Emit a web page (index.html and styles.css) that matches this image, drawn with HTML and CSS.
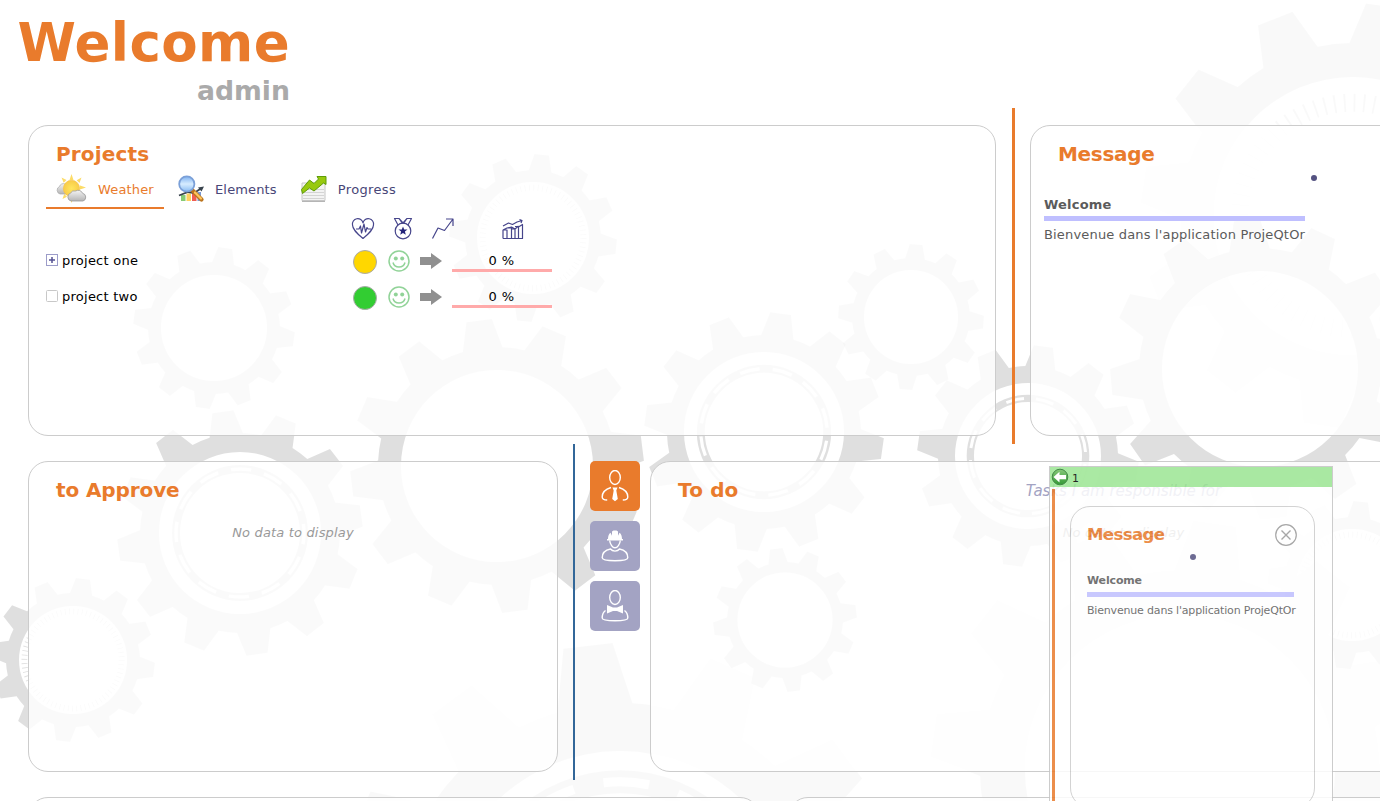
FILE: index.html
```html
<!DOCTYPE html>
<html lang="en">
<head>
<meta charset="utf-8">
<title>Welcome</title>
<link rel="stylesheet" href="styles.css">
</head>
<body>
<svg class="gears" id="gears" width="1380" height="801" viewBox="0 0 1380 801" aria-hidden="true"></svg>
<main class="page">
  <header class="hero">
    <h1 class="hero-title">Welcome</h1>
    <div class="hero-user">admin</div>
  </header>

  <div class="row row-top">
    <section class="panel projects">
      <h2 class="panel-title">Projects</h2>
      <nav class="tabs">
        <a class="tab tab-active"><svg class="tab-icon tab-icon-weather" width="32" height="30" viewBox="0 0 32 30">
          <defs>
            <linearGradient id="cloud" x1="0" y1="0" x2="0" y2="1"><stop offset="0" stop-color="#f4f4f4"/><stop offset="1" stop-color="#b5b5b5"/></linearGradient>
            <radialGradient id="sun"><stop offset="0" stop-color="#ffe65e"/><stop offset="1" stop-color="#f8cb48"/></radialGradient>
          </defs>
          <path d="M15.500 0l2 6h-4zM25.500 3.500l-2 5.600-2.800-2.800zM5.500 3.500l5 2.400-2.800 2.800zM30 13.500l-6 2v-4zM6.500 25l1.700-5 2.800 2.800zM15.500 29l-2-6h4z" fill="#fcdc68"/>
          <path d="M4 20a4 4 0 0 1-.5-7.500A4 4 0 0 1 9 10a4 4 0 0 1 6 4v6z" fill="url(#cloud)" stroke="#a9a9a9" stroke-width=".7"/>
          <circle cx="15.500" cy="14.500" r="8.200" fill="url(#sun)" stroke="#f5c04a" stroke-width=".6"/>
          <path d="M15 27a4.200 4.200 0 0 1-.4-8 4.300 4.300 0 0 1 5-2 4.800 4.800 0 0 1 7 2.300 4 4 0 0 1 .4 7.700z" fill="url(#cloud)" stroke="#999" stroke-width=".8"/>
        </svg><span>Weather</span></a>
        <a class="tab"><svg class="tab-icon tab-icon-elements" width="28" height="28" viewBox="0 0 28 28">
          <defs><linearGradient id="lens" x1="0" y1="0" x2="0" y2="1"><stop offset="0" stop-color="#7eb1f0"/><stop offset=".5" stop-color="#d7ecff"/><stop offset="1" stop-color="#8abcf3"/></linearGradient></defs>
          <path d="M4 20h4.500v6H4z" fill="#86cb75"/><path d="M9.500 18.500H14V26H9.500z" fill="#ffd05e"/><path d="M15 18h4.500v8H15z" fill="#f05d51"/><path d="M20.500 17H24v9h-3.500z" fill="#7998d2"/>
          <path d="M2 20.500l9-3.500 6 1 7-4.500" fill="none" stroke="#39434d" stroke-width="1.800"/><path d="M21 12.500l6-1-2.500 5z" fill="#39434d"/>
          <path d="M15 15l9.500 9.500" stroke="#bb751f" stroke-width="4.200" stroke-linecap="round"/><path d="M18 17.500l6 6" stroke="#ffc55a" stroke-width="2.200" stroke-linecap="round"/>
          <circle cx="9.800" cy="9" r="7.600" fill="url(#lens)" stroke="#7ba0d8" stroke-width="1.800"/>
        </svg><span>Elements</span></a>
        <a class="tab"><svg class="tab-icon tab-icon-progress" width="28" height="28" viewBox="0 0 28 28">
          <path d="M2 8h23v17.500H2z" fill="#f3f3f3" stroke="#c6c6c6"/><path d="M3 14.500h21M3 17.500h21M3 20.500h21M3 23.500h21" stroke="#d4d4d4"/><path d="M2 26.500h23" stroke="#b5b5b5"/>
          <path d="M1.500 14.500L9.500 5l4.500 3.500 4.500-4.500-1.500-2.500h9v8l-2.500-1.500-9.500 8-4.500-3-7 5.500z" fill="#98c90f" stroke="#5f9d08"/>
        </svg><span>Progress</span></a>
      </nav>
      <div class="grid">
        <div class="grid-row grid-head">
          <span></span>
          <svg width="24" height="24" viewBox="0 0 24 24" class="line-icon"><path d="M12 21.500C6 16.500 1.500 12.500 1.500 8a5.300 5.300 0 0 1 10.500-2A5.300 5.300 0 0 1 22.500 8c0 4.500-4.500 8.500-10.500 13.500zM5 12h3l1.500-3 1 7L13 7l1.500 8 1.500-4.500 1 1.500h3"/></svg>
          <svg width="24" height="24" viewBox="0 0 24 24" class="line-icon"><circle cx="12" cy="14" r="7.800"/><path d="M7 8L3.500 1.500H8L12 6l4-4.500h4.500L17 8M8 1.500l3.500 5M16 1.500l-3.500 5"/><path class="solid" d="M12 9.500l1.200 3 3.300.1-2.600 2 .9 3.200-2.800-1.800-2.800 1.800.9-3.200-2.600-2 3.300-.1z"/></svg>
          <svg width="24" height="24" viewBox="0 0 24 24" class="line-icon"><path d="M1.500 21.500L7 11l6.500 2.500L22 2M15 2h7v7"/></svg>
          <svg width="24" height="24" viewBox="0 0 24 24" class="line-icon icon-total"><path d="M2 21.500V13h4v8.500m0-10.500h4.500v10.500m0-9.500H14v9.500m0-12h3.500v12m0-11.500 4-2.500v14H2M2 9l5.500-3 4 1.500L16 5l5-1.500M18.500 2.500l2.500 1-1 2.500M2 13l4-2 4.500-1 3.500 2 3.500-3"/></svg>
        </div>
        <div class="grid-row">
          <span class="name"><svg width="12" height="12" viewBox="0 0 12 12"><rect x=".5" y=".5" width="11" height="11" fill="#fff" stroke="#9c9cc9"/><path d="M6 3v6M3 6h6" stroke="#545292" stroke-width="1.500"/></svg>project one</span>
          <i class="health health-gold"></i>
          <svg class="smile" width="22" height="22" viewBox="0 0 22 22"><circle cx="11" cy="11" r="10"/><path d="M5 12.500c1.500 6 10.500 6 12 0"/><circle class="eye" cx="7.800" cy="8.500" r="2"/><circle class="eye" cx="14.200" cy="8.500" r="2"/></svg>
          <svg class="arrow" width="22" height="16" viewBox="0 0 22 16"><path d="M0 4h11V0l11 8-11 8v-4H0z"/></svg>
          <span class="bar">0 %</span>
        </div>
        <div class="grid-row">
          <span class="name"><svg width="12" height="12" viewBox="0 0 12 12"><rect x=".5" y=".5" width="11" height="11" rx="1" fill="#fff" stroke="#c8c8c8"/></svg>project two</span>
          <i class="health health-green"></i>
          <svg class="smile" width="22" height="22" viewBox="0 0 22 22"><circle cx="11" cy="11" r="10"/><path d="M5 12.500c1.500 6 10.500 6 12 0"/><circle class="eye" cx="7.800" cy="8.500" r="2"/><circle class="eye" cx="14.200" cy="8.500" r="2"/></svg>
          <svg class="arrow" width="22" height="16" viewBox="0 0 22 16"><path d="M0 4h11V0l11 8-11 8v-4H0z"/></svg>
          <span class="bar">0 %</span>
        </div>
      </div>
    </section>
    <div class="divider divider-orange"></div>
    <section class="panel message">
      <h2 class="panel-title title-message">Message</h2>
      <i class="dot"></i>
      <div class="news">
        <div class="news-title">Welcome</div>
        <div class="news-text">Bienvenue dans l'application ProjeQtOr</div>
      </div>
    </section>
  </div>

  <div class="row row-mid">
    <section class="panel approve">
      <h2 class="panel-title title-approve">to Approve</h2>
      <p class="empty">No data to display</p>
    </section>
    <div class="divider divider-blue"></div>
    <div class="roles">
      <button class="role role-active"><svg width="28" height="32" viewBox="0 0 28 32"><ellipse cx="14" cy="7.500" rx="5.300" ry="7"/><path d="M10 17.500C5 19 1.200 21.500 1.200 27c0 2.500 2 3 5 3M18 17.500c5 1.500 8.800 4 8.800 9.500 0 2.500-2 3-5 3"/><path class="solid" d="M11.500 17.500h5l-1.200 3 1.500 8.500-2.800 2.300-2.800-2.300 1.500-8.500z"/></svg></button>
      <button class="role"><svg width="28" height="32" viewBox="0 0 28 32"><path class="solid" d="M6 10.500V9h1c0-3 .8-5 2.500-6.200l1.500 3V1.500l1.500-1h3l1.500 1v4.300l1.500-3C20.200 4 21 6 21 9h1v1.500z"/><path d="M8.700 10.500c.3 3.800 3 7.300 5.300 7.300s5-3.500 5.300-7.300M9.500 19c-5 1-8.300 4-8.300 8.800 0 2 5 2.900 12.800 2.900s12.800-.9 12.800-2.900c0-4.800-3.300-7.800-8.300-8.800-2 2.800-7 2.800-9 0z"/></svg></button>
      <button class="role"><svg width="28" height="32" viewBox="0 0 28 32"><ellipse cx="14" cy="7.500" rx="5.300" ry="7"/><path d="M4.500 20.500C2.500 22 1.200 24.500 1.200 28c0 2 5 2.700 12.800 2.700s12.800-.7 12.800-2.700c0-3.500-1.300-6-3.300-7.500"/><path class="solid" d="M6 15l6 2.500h4l6-2.500v8.500L16 21h-4l-6 2.500z"/></svg></button>
    </div>
    <section class="panel todo">
      <h2 class="panel-title">To do</h2>
      <p class="scope">Tasks I am responsible for</p>
      <p class="empty empty-todo">No data to display</p>
    </section>
  </div>

  <div class="row row-low">
    <section class="panel low-left"></section>
    <section class="panel low-right"></section>
  </div>
</main>

<aside class="popup">
  <div class="popup-bar">
    <svg width="18" height="18" viewBox="0 0 18 18"><defs><linearGradient id="ball" x1="0" y1="0" x2="0" y2="1"><stop offset="0" stop-color="#72bf62"/><stop offset="1" stop-color="#118913"/></linearGradient></defs><circle cx="9" cy="9" r="7.800" fill="url(#ball)" stroke="#237528" stroke-width="1"/><path d="M2.500 9l6-5.200V7H15v4.200H8.500v3.200z" fill="#fff"/></svg>
    <span class="popup-count">1</span>
  </div>
  <div class="popup-body">
    <div class="popup-line"></div>
    <div class="card">
      <div class="card-head"><h3 class="card-title">Message</h3>
        <svg class="close" width="24" height="24" viewBox="0 0 24 24" fill="none" stroke="#999"><circle cx="12" cy="12" r="10.300" stroke-width="1.200"/><path d="M7.500 7.500l9 9m0-9l-9 9" stroke-width="1.400"/></svg></div>
      <i class="dot dot-small"></i>
      <div class="card-news-title">Welcome</div>
      <div class="card-news-text">Bienvenue dans l'application ProjeQtOr</div>
    </div>
  </div>
</aside>
<script src="gears.js"></script>
</body>
</html>
```
FILE: styles.css
```css
* { box-sizing: border-box; }
html { height: 100%; overflow: hidden; }
body { margin: 0; width: 1380px; height: 801px; overflow: hidden; background: #fff; font-family: Verdana, "DejaVu Sans", sans-serif; font-size: 13px; color: #000; position: relative; }
.gears { position: absolute; left: 0; top: 0; }
.gear { fill: #000; fill-opacity: .125; fill-rule: evenodd; }
.gear-pale { fill-opacity: .022; }
.ring { fill: none; stroke: #000; stroke-opacity: .125; }
.ring-pale { stroke-opacity: .022; }
.page { position: relative; width: 1380px; height: 801px; overflow: hidden; }

.hero { width: 290px; height: 108px; padding-top: 12px; display: flex; flex-direction: column; align-items: flex-end; }
.hero-title { margin: 0; font-size: 53px; line-height: 62px; color: #e97b2c; white-space: nowrap; letter-spacing: .4px; }
.hero-user { font-size: 26.700px; line-height: 34px; font-weight: bold; color: #aaa; }

.row { display: flex; padding-left: 28px; align-items: flex-start; }
.row-top { height: 336px; }
.row-mid { height: 336px; }
.row-low { padding-top: 17px; gap: 28px; }
.panel { flex: none; background: rgba(255, 255, 255, .85); border: 1px solid #ccc; border-radius: 20px; height: 311px; margin-top: 17px; }
.row-low .panel { margin-top: 0; }
.panel-title { margin: 0; padding: 15px 0 0 27px; font-size: 20px; line-height: 26px; color: #e97b2c; letter-spacing: .15px; }
.title-message { letter-spacing: -.3px; }
.title-approve { letter-spacing: -.1px; }
.projects { width: 968px; }
.message { width: 567px; }
.approve { width: 530px; }
.todo { width: 947px; }
.low-left { width: 732px; }
.low-right { width: 809px; }
.divider { height: 336px; flex: none; }
.divider-orange { width: 3px; background: #e97b2c; margin: 0 15px 0 16px; }
.divider-blue { width: 2px; background: #336799; margin: 0 15px; }

.tabs { display: flex; margin: 4px 0 0 17px; height: 38px; color: #484678; letter-spacing: .15px; }
.tab { display: flex; align-items: center; height: 38px; font-size: 13px; line-height: 36px; }
.tab-active { width: 118px; color: #e97b2c; border-bottom: 2px solid #e97b2c; }
.tab-active span { padding-top: 2px; }
.tab-icon { flex: none; }
.tab-icon-weather { margin: 0 10px 0 10px; }
.tab-icon-elements { margin: -3px 10px 0 13px; }
.tab-icon-progress { margin: -3px 10px 0 23px; }
.tab:last-child span { letter-spacing: .35px; }

.grid { padding: 6px 0 0 17px; }
.grid-row { display: grid; grid-template-columns: 307px 37px 31px 31px 100px; height: 36px; align-items: center; }
.grid-head { height: 26px; margin-bottom: 1px; grid-template-columns: 305px 40px 40px 60px 24px; padding-top: 1px; }
.icon-total { margin-left: 10px; }
.line-icon { fill: none; stroke: #46458b; stroke-width: 1.200; stroke-linejoin: round; }
.line-icon .solid { fill: #25247a; stroke: none; }
.name { display: flex; align-items: center; gap: 4px; letter-spacing: .25px; }
.health { width: 24px; height: 24px; border-radius: 50%; border: 1px solid #aaa; margin-top: 3px; }
.health-gold { background: #ffd700; }
.health-green { background: #32cd32; }
.smile { fill: none; stroke: #91d398; stroke-width: 1.500; margin: 1px 0 0 -2px; }
.smile .eye { fill: #91d398; stroke: none; }
.arrow { fill: #909090; margin: 1px 0 0 -1px; }
.bar { width: 100px; height: 20px; border-bottom: 3px solid #ffaaaa; line-height: 18px; text-align: center; letter-spacing: .4px; padding-right: 1px; margin: 3px 0 0 0; }

.dot { display: block; width: 6px; height: 6px; border-radius: 50%; background: #545281; margin: 8px auto 0; }
.news { padding: 12px 0 0 13px; width: 274px; color: #5b5b5b; white-space: nowrap; }
.news-title { font-weight: bold; line-height: 22px; padding-top: 1px; border-bottom: 5px solid #bfbfff; letter-spacing: .2px; height: 28px; }
.news-text { line-height: 28px; letter-spacing: .17px; }

.empty { margin: 20px 0 0; text-align: center; font-style: italic; color: #999; line-height: 20px; letter-spacing: .17px; }
.roles { display: flex; flex-direction: column; gap: 10px; margin: 17px 10px 0 0; }
.role { width: 50px; height: 50px; padding: 3px 0 0; border: 0; border-radius: 5px; background: #a3a3c3; }
.role svg { fill: none; stroke: #fff; stroke-width: 1.400; }
.role .solid { fill: #fff; stroke: none; }
.role-active { background: #e97b2c; }
.scope { margin: -23px 0 0; text-align: center; font-size: 15px; font-style: italic; line-height: 22px; color: #a3a3c3; }
.empty-todo { margin-top: 21px; }

.popup { position: absolute; left: 1049px; top: 466px; width: 284px; height: 335px; overflow: hidden; background: #fff; border: 1px solid #c4c4c4; border-bottom: 0; opacity: .85; }
.popup-bar { height: 20px; background: #9ce693; display: flex; align-items: center; gap: 3px; padding-left: 1px; font-size: 11px; }
.popup-count { padding-top: 2px; }
.popup-body { display: flex; padding: 2px 0 0 2px; }
.popup-line { width: 3px; height: 312px; background: #e97b2c; }
.card { width: 245px; height: 302px; margin: 17px 0 -7px 15px; border: 1px solid #ccc; border-radius: 20px; padding: 15px 16px 0 16px; color: #5b5b5b; white-space: nowrap; }
.card-head { display: flex; justify-content: space-between; align-items: center; height: 25px; }
.card-title { margin: 0; font-size: 16.600px; line-height: 24px; color: #e97b2c; letter-spacing: -.65px; }
.close { margin-top: 1px; }
.dot-small { margin: 7px 0 0 103px; }
.card-news-title { font-size: 11px; font-weight: bold; line-height: 18px; margin-top: 12px; padding-bottom: 2px; border-bottom: 5px solid #bfbfff; width: 207px; letter-spacing: -.15px; }
.card-news-text { font-size: 11px; line-height: 20px; margin-top: 4px; letter-spacing: -.18px; }
```
FILE: gears.js
```js
// x, y, outer radius, root radius, hole radius, phase in degrees, pale, inner ring style
const gears = [
  [214, 328, 81, 66, 53, 8, false, null],
  [533, 238, 84, 68, 56, 6, false, 'ticks'],
  [240, 533, 123, 100, 81, -8, false, 'dashes'],
  [73, 660, 82, 67, 54, 7, false, 'ticks'],
  [497, 466, 147, 119, 96, -7, false, null],
  [764, 432, 120, 97, 80, 8, false, 'dashes'],
  [1028, 456, 111, 90, 73, 8, false, 'dashes'],
  [911, 317, 73, 59, 47, 4, false, null],
  [785, 620, 72, 58, 47.5, -7, false, null],
  [1260, 369, 150, 121, 98, -5, false, null],
  [1352, 585, 84, 68, 56, 6, false, 'ticks'],
  [1353, 216, 213, 173, 139, 8.5, true, 'ticks'],
  [620, 927, 284, 224, 176, -6.5, true, 'dashes'],
  [1180, 770, 250, 200, 155, 8, true, null]
];
const NS = 'http://www.w3.org/2000/svg';
const svg = document.getElementById('gears');

function add(tag, attrs) {
  const el = document.createElementNS(NS, tag);
  for (const key in attrs) el.setAttribute(key, attrs[key]);
  svg.appendChild(el);
}

function circle(x, y, r) {
  return `M${x - r} ${y}a${r} ${r} 0 1 0 ${2 * r} 0a${r} ${r} 0 1 0 ${-2 * r} 0z`;
}

for (const [x, y, outer, root, hole, phase, pale, ring] of gears) {
  const at = (r, deg) => {
    const a = (deg - 90) * Math.PI / 180;
    return `${(x + r * Math.cos(a)).toFixed(2)} ${(y + r * Math.sin(a)).toFixed(2)}`;
  };
  let d = '';
  for (let i = 0; i < 12; i++) {
    const c = phase + i * 30;
    d += i ? `A${root} ${root} 0 0 1 ${at(root, c - 9.7)}` : `M${at(root, c - 9.7)}`;
    d += `L${at(outer, c - 5)}L${at(outer, c + 5)}L${at(root, c + 9.7)}`;
  }
  d += `A${root} ${root} 0 0 1 ${at(root, phase - 9.7)}z` + circle(x, y, hole);
  const ringClass = pale ? 'ring ring-pale' : 'ring';
  if (ring === 'dashes') {
    const r1 = hole * (pale ? .89 : .84), r2 = hole * (pale ? .76 : .74);
    const a = r1 - (r1 - r2) * .3, b = r1 - (r1 - r2) * .7;
    d += circle(x, y, r1) + circle(x, y, r2);
    for (let i = 0; i < 12; i++) {
      const s = phase + i * 30;
      d += `M${at(a, s)}A${a} ${a} 0 0 1 ${at(a, s + 18)}L${at(b, s + 18)}A${b} ${b} 0 0 0 ${at(b, s)}z`;
    }
  }
  add('path', { d, class: pale ? 'gear gear-pale' : 'gear' });
  if (ring === 'ticks') {
    const r = hole * (pale ? .815 : .9), step = 2 * Math.PI * r / 72;
    add('circle', { cx: x, cy: y, r, class: ringClass, 'stroke-width': hole * (pale ? .13 : .11), 'stroke-dasharray': `${step * .2} ${step * .8}` });
  }
}
```
